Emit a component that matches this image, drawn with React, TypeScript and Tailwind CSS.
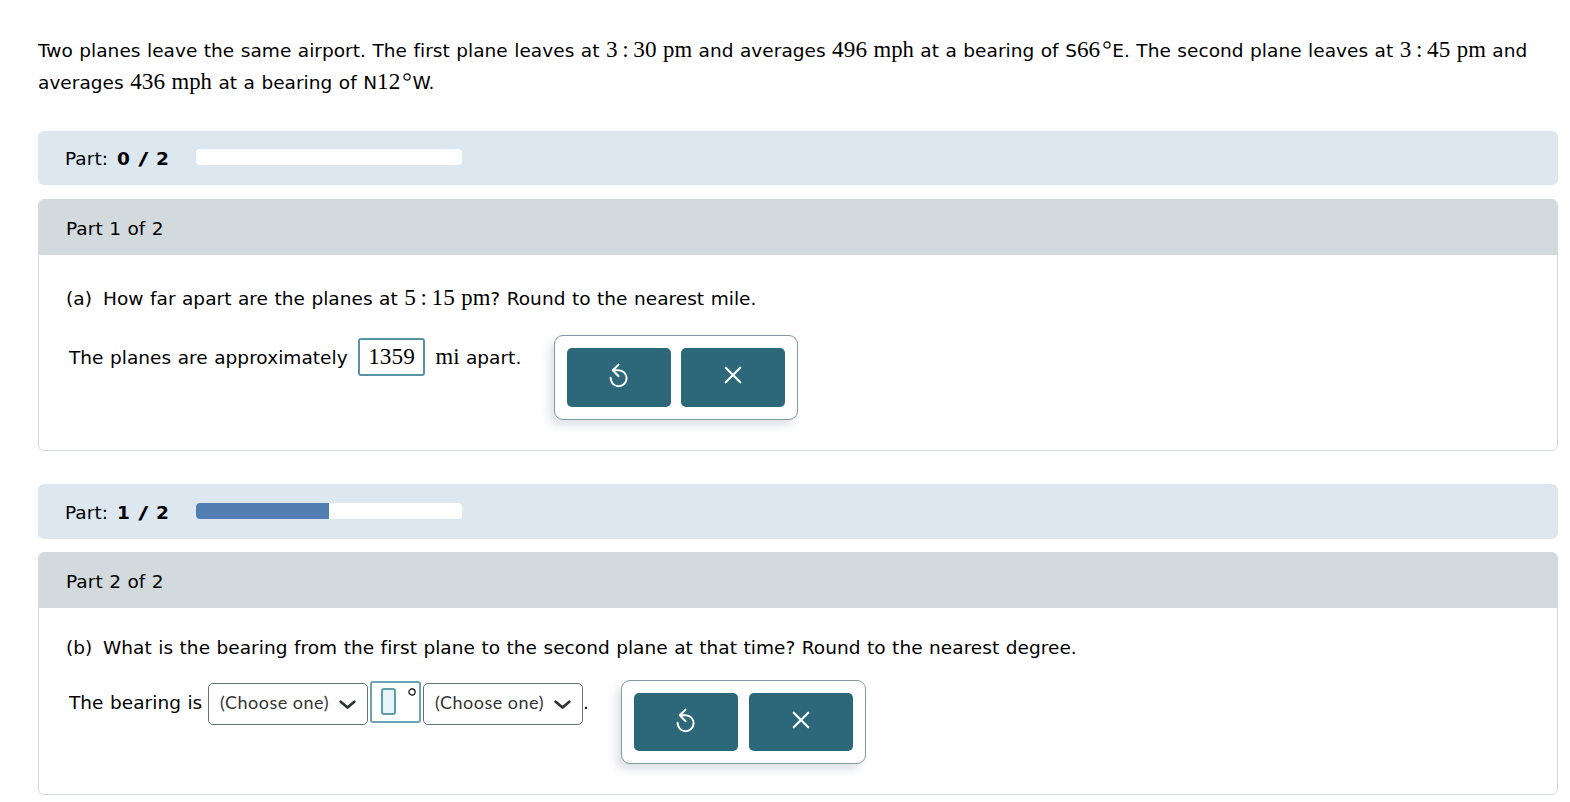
import React, { useState } from 'react'

function MathText({ children }: { children: React.ReactNode }) {
  return (
    <span className="font-['Liberation_Serif',serif] text-[23.2px] leading-none tracking-[0.05px]">
      {children}
    </span>
  )
}

function Time({ hour, minute }: { hour: string; minute: string }) {
  return (
    <MathText>
      {hour}
      <span className="mx-[4.6px]">:</span>
      {minute}
    </MathText>
  )
}

function Unit({ children }: { children: React.ReactNode }) {
  return (
    <span className="font-['Liberation_Serif',serif] text-[22.7px] leading-none tracking-normal">
      {children}
    </span>
  )
}

function Degree() {
  return (
    <svg className="inline-block w-[8px] h-[8px] ml-[3px] mr-px align-[8px]" viewBox="0 0 8 8" fill="none">
      <circle cx="4" cy="4" r="3.1" stroke="black" strokeWidth="1.2" />
    </svg>
  )
}

function ResetIcon() {
  return (
    <svg className="w-[20px] h-[26px]" viewBox="0 0 20 26" fill="none" stroke="white" strokeWidth="2" strokeLinecap="round" strokeLinejoin="round">
      <path d="M1.6 15.8A8 8 0 1 0 9.6 8.2H3.8" />
      <path d="M9.6 2.6L3.8 8.2L9.6 14.2" />
    </svg>
  )
}

function CloseIcon() {
  return (
    <svg className="w-[18px] h-[18px]" viewBox="0 0 18 18" fill="none" stroke="white" strokeWidth="2.1" strokeLinecap="round">
      <path d="M1.7 1.7L16.3 16.3M16.3 1.7L1.7 16.3" />
    </svg>
  )
}

function ProgressBar({ done, total, className }: { done: number; total: number; className: string }) {
  return (
    <div className={`flex items-start rounded-[6px] bg-[#dde7f0] pl-[27px] ${className}`}>
      <p className="w-[131px] leading-[32px] whitespace-nowrap">
        Part:{' '}
        <b className="ml-[2.5px]">
          {done} <span className="inline-block mx-[2.6px] scale-x-150">/</span> {total}
        </b>
      </p>
      <div className="mt-[6px] w-[266px] h-[16px] rounded-[4px] bg-white overflow-hidden">
        <div className="h-full bg-[#527eb4]" style={{ width: `${(done / total) * 100}%` }} />
      </div>
    </div>
  )
}

function Panel({ title, className, children }: { title: string; className: string; children: React.ReactNode }) {
  return (
    <section className={`rounded-[6px] border border-[#d3dadd] overflow-hidden ${className}`}>
      <h2 className="h-[55px] bg-[#d3dadd] pl-[27px] pt-[13px] leading-[32px]">{title}</h2>
      {children}
    </section>
  )
}

function Actions({ onReset, className }: { onReset: () => void; className: string }) {
  return (
    <div className={`flex rounded-[9px] border border-[#7f9aa3] bg-white p-[12px] shadow-[-5px_6px_8px_rgba(60,90,105,0.16)] ${className}`}>
      <button aria-label="Reset" onClick={onReset} className="flex w-[104px] justify-center rounded-[5px] bg-[#2c6879] pt-[14px]">
        <ResetIcon />
      </button>
      <button aria-label="Clear" onClick={onReset} className="flex w-[104px] justify-center rounded-[5px] bg-[#2c6879] pt-[18px]">
        <CloseIcon />
      </button>
    </div>
  )
}

function Choice() {
  return (
    <button className="flex w-[160px] h-[42px] items-center rounded-[5px] border border-[#666f71] pl-[11px] text-[#333] font-['Lato',sans-serif] text-[18px] tracking-[0.5px] [word-spacing:0]">
      <span className="w-[119px] pb-[4px] text-left whitespace-nowrap">(Choose one)</span>
      <svg className="w-[17px] h-[10px] mt-[2px]" viewBox="0 0 17 10" fill="none" stroke="#2f3333" strokeWidth="2.7" strokeLinecap="round" strokeLinejoin="round">
        <path d="M1.7 1.7L8.5 7.5L15.3 1.7" />
      </svg>
    </button>
  )
}

export default function App() {
  const [distance, setDistance] = useState('1359')

  return (
    <main className="h-[802px] overflow-hidden bg-white pl-[38px] pr-[12px] pt-[35px] font-['DejaVu_Sans',sans-serif] text-[18.5px] tracking-[0.04px] [word-spacing:0.55px] text-black">
      <div className="h-[96px] leading-[32px] whitespace-nowrap">
        <p className="h-[32px]">
          Two planes leave the same airport. The first plane leaves at <Time hour="3" minute="30" /> <Unit>pm</Unit> and
          averages <MathText>496</MathText> <Unit>mph</Unit> at a bearing of S<MathText>66</MathText><Degree />E. The
          second plane leaves at <Time hour="3" minute="45" /> <Unit>pm</Unit> and
        </p>
        <p className="h-[32px]">
          averages <MathText>436</MathText> <Unit>mph</Unit> at a bearing of N<MathText>12</MathText><Degree />W.
        </p>
      </div>

      <ProgressBar done={0} total={2} className="h-[54px] pt-[12px]" />
      <Panel title="Part 1 of 2" className="mt-[14px] h-[252px]">
        <p className="mt-[28px] ml-[27px] h-[32px] leading-[32px] whitespace-nowrap">
          <span className="inline-block w-[37px]">(a)</span>
          How far apart are the planes at <Time hour="5" minute="15" /> <Unit>pm</Unit>? Round to the nearest mile.
        </p>
        <div className="flex items-start ml-[30px] mt-[20px] leading-[32px] whitespace-nowrap">
          <span className="w-[289px] pt-[7px]">The planes are approximately</span>
          <div className="mt-[3px] w-[67px] h-[38px] rounded-[3px] border-2 border-[#5793a5] text-center leading-[35px]">
            <MathText>{distance}</MathText>
          </div>
          <span className="w-[129px] pl-[10.5px] pt-[7px]"><Unit>mi</Unit> apart.</span>
          <Actions onReset={() => setDistance('')} className="w-[244px] h-[85px] gap-[10px]" />
        </div>
      </Panel>

      <ProgressBar done={1} total={2} className="mt-[33px] h-[55px] pt-[13px]" />
      <Panel title="Part 2 of 2" className="mt-[13px] h-[243px]">
        <p className="mt-[24px] ml-[27px] h-[32px] leading-[32px] whitespace-nowrap">
          <span className="inline-block w-[37px]">(b)</span>
          What is the bearing from the first plane to the second plane at that time? Round to the nearest degree.
        </p>
        <div className="flex items-start ml-[30px] mt-[16px] leading-[32px] whitespace-nowrap">
          <span className="w-[139px] pt-[7px]">The bearing is</span>
          <div className="pt-[3px]"><Choice /></div>
          <div className="flex justify-between mt-px ml-[2px] mr-[2px] w-[51px] h-[42px] rounded-[3px] border-2 border-[#6aa5b5] pl-[9px] pr-[3px] pt-[5px]">
            <span className="w-[15px] h-[27px] rounded-[3px] border-2 border-[#5d9cab] bg-[#e9f4f9]" />
            <svg className="w-[8px] h-[8px]" viewBox="0 0 8 8" fill="none">
              <circle cx="4" cy="4" r="3.1" stroke="black" strokeWidth="1.2" />
            </svg>
          </div>
          <div className="pt-[3px]"><Choice /></div>
          <span className="w-[38px] pt-[7px]">.</span>
          <Actions onReset={() => undefined} className="w-[245px] h-[84px] gap-[11px]" />
        </div>
      </Panel>
    </main>
  )
}
